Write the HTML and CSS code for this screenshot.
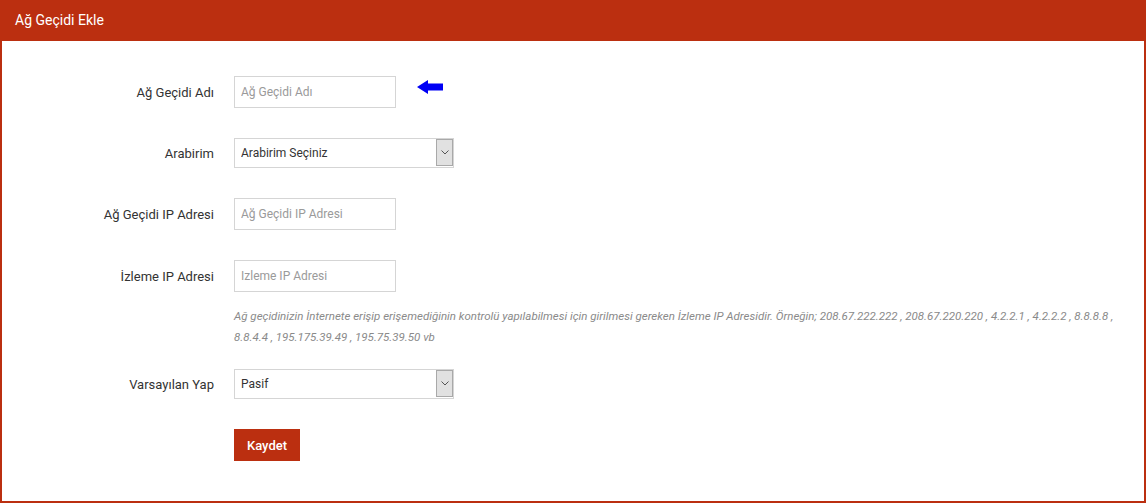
FILE: index.html
```html
<!DOCTYPE html>
<html lang="tr">
<head>
    <meta charset="UTF-8">
    <meta name="viewport" content="width=device-width, initial-scale=1.0">
    <title>Ağ Geçidi Ekle</title>
    <link rel="stylesheet" href="styles.css">
</head>
<body>
    <div class="panel">
        <div class="panel-heading">Ağ Geçidi Ekle</div>

        <form class="panel-body">
            <div class="form-row">
                <label class="form-label" for="gw-name">Ağ Geçidi Adı</label>
                <input class="form-input" id="gw-name" type="text" placeholder="Ağ Geçidi Adı">
                <svg class="hint-arrow" width="26" height="14" viewBox="0 0 26 14">
                    <path d="M0 7 L11 0 L11 3.5 L26 3.5 L26 10.5 L11 10.5 L11 14 Z" fill="#0000f5"/>
                </svg>
            </div>

            <div class="form-row">
                <label class="form-label" for="gw-iface">Arabirim</label>
                <div class="select-wrap">
                    <select class="form-select" id="gw-iface">
                        <option>Arabirim Seçiniz</option>
                    </select>
                    <span class="select-btn">
                        <svg width="8" height="5" viewBox="0 0 8 5"><path d="M0.5 0.5 L4 4 L7.5 0.5" fill="none" stroke="#555" stroke-width="1"/></svg>
                    </span>
                </div>
            </div>

            <div class="form-row">
                <label class="form-label" for="gw-ip">Ağ Geçidi IP Adresi</label>
                <input class="form-input" id="gw-ip" type="text" placeholder="Ağ Geçidi IP Adresi">
            </div>

            <div class="form-row tight">
                <label class="form-label" for="gw-monitor">İzleme IP Adresi</label>
                <input class="form-input" id="gw-monitor" type="text" placeholder="Izleme IP Adresi">
            </div>
            <p class="help-text">Ağ geçidinizin İnternete erişip erişemediğinin kontrolü yapılabilmesi için girilmesi gereken İzleme IP Adresidir. Örneğin; 208.67.222.222 , 208.67.220.220 , 4.2.2.1 , 4.2.2.2 , 8.8.8.8 , 8.8.4.4 , 195.175.39.49 , 195.75.39.50 vb</p>

            <div class="form-row">
                <label class="form-label" for="gw-default">Varsayılan Yap</label>
                <div class="select-wrap">
                    <select class="form-select" id="gw-default">
                        <option>Pasif</option>
                        <option>Aktif</option>
                    </select>
                    <span class="select-btn">
                        <svg width="8" height="5" viewBox="0 0 8 5"><path d="M0.5 0.5 L4 4 L7.5 0.5" fill="none" stroke="#555" stroke-width="1"/></svg>
                    </span>
                </div>
            </div>

            <div class="form-actions">
                <button class="btn-save" type="button">Kaydet</button>
            </div>
        </form>
    </div>
</body>
</html>
```

FILE: styles.css
```css
* {
    margin: 0;
    padding: 0;
    box-sizing: border-box;
}

body {
    font-family: Roboto, "Liberation Sans", Arial, sans-serif;
    font-size: 13px;
    color: #333;
    background: #fff;
}

.panel {
    width: 1146px;
    height: 503px;
    border: 2px solid #bb2f10;
    border-top: none;
    display: flex;
    flex-direction: column;
}

.panel-heading {
    background: #bb2f10;
    color: #fff;
    font-size: 14px;
    height: 41px;
    line-height: 40px;
    margin: 0 -2px;
    padding-left: 15px;
}

.panel-body {
    padding: 35px 20px 0 0;
}

.form-row {
    display: flex;
    align-items: center;
    margin-bottom: 30px;
}

.form-row.tight {
    margin-bottom: 0;
}

.form-label {
    width: 212px;
    text-align: right;
    margin-right: 20px;
    color: #333;
}

.form-input {
    width: 162px;
    height: 32px;
    border: 1px solid #d5d5d5;
    padding: 0 6px;
    font-family: inherit;
    font-size: 12px;
    color: #333;
    outline: none;
}

.form-input::placeholder {
    color: #9a9a9a;
}

.hint-arrow {
    align-self: flex-start;
    margin: 4px 0 0 21px;
}

.select-wrap {
    position: relative;
    width: 220px;
    height: 30px;
}

.form-select {
    appearance: none;
    -webkit-appearance: none;
    width: 100%;
    height: 100%;
    border: 1px solid #d5d5d5;
    border-radius: 0;
    background: #fff;
    padding: 0 6px;
    font-family: inherit;
    font-size: 12px;
    color: #333;
    outline: none;
}

.select-btn {
    position: absolute;
    top: 1px;
    right: 1px;
    bottom: 2px;
    width: 17px;
    background: #e1e1e1;
    border: 1px solid #a9a9a9;
    display: flex;
    align-items: center;
    justify-content: center;
    pointer-events: none;
}

.help-text {
    margin: 14px 0 21px 232px;
    font-size: 11.5px;
    font-style: italic;
    line-height: 21px;
    color: #8a8a8a;
}

.form-actions {
    padding-left: 232px;
}

.btn-save {
    width: 66px;
    height: 32px;
    border: none;
    background: #bb2f10;
    color: #fff;
    font-family: inherit;
    font-size: 13px;
    font-weight: 500;
    cursor: pointer;
}
```
